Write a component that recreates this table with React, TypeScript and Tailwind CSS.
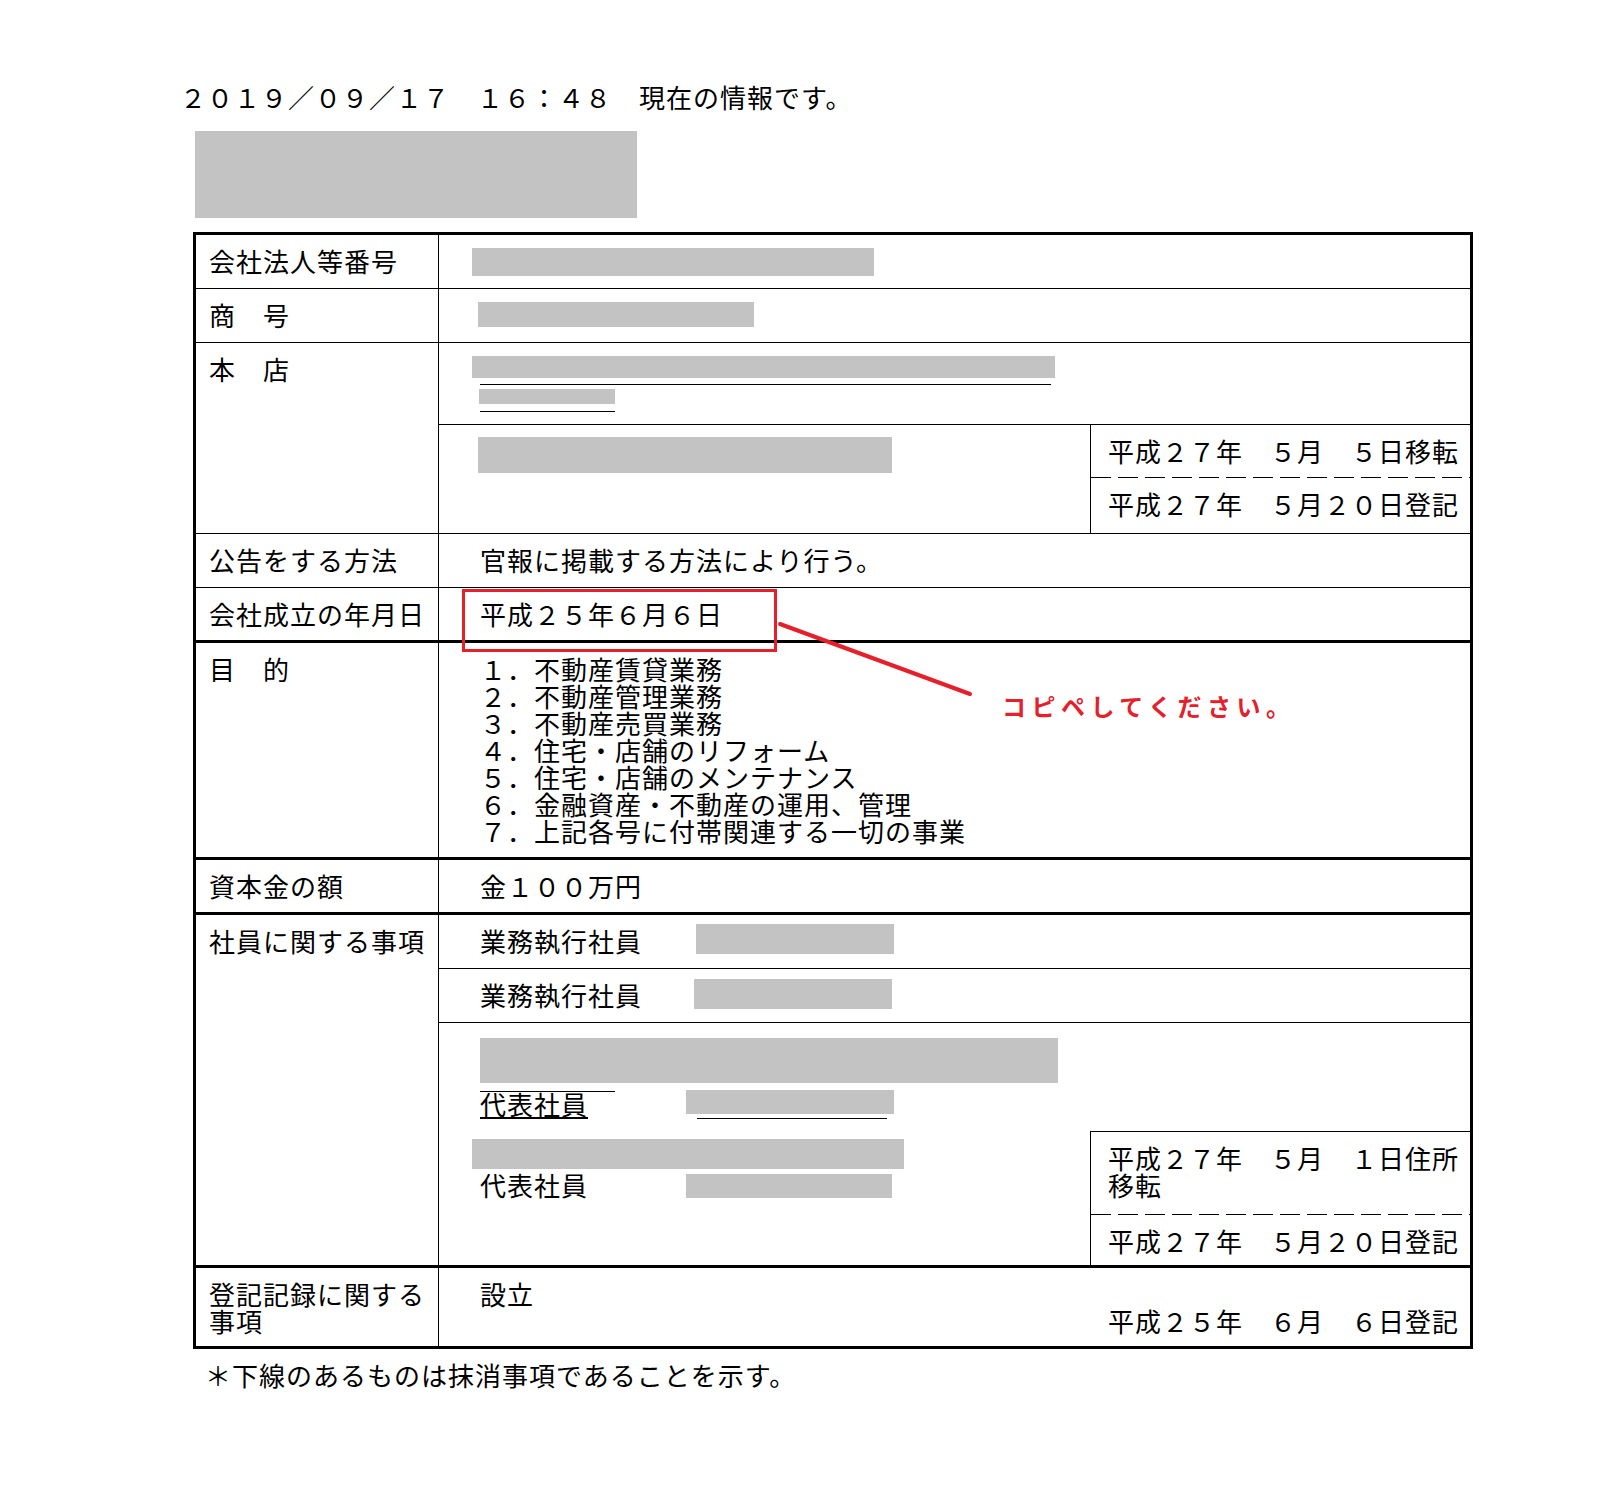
import React from 'react';

const PURPOSES = [
  '１．不動産賃貸業務',
  '２．不動産管理業務',
  '３．不動産売買業務',
  '４．住宅・店舗のリフォーム',
  '５．住宅・店舗のメンテナンス',
  '６．金融資産・不動産の運用、管理',
  '７．上記各号に付帯関連する一切の事業',
];

function Gray({ className = '' }: { className?: string }) {
  return <div className={`bg-[#c3c3c3] ${className}`} />;
}

// underline left behind by a struck (抹消) entry whose text is redacted
function Struck({ className = '' }: { className?: string }) {
  return <div className={`h-[29px] border-b border-black ${className}`} />;
}

function Dashed() {
  return (
    <div className="h-px bg-[image:repeating-linear-gradient(90deg,#000_0px,#000_20px,transparent_20px,transparent_27px)]" />
  );
}

function Label({ children }: { children: React.ReactNode }) {
  return <div className="border-r border-black pl-[13px] pr-[8px] pt-[12px]">{children}</div>;
}

function Row({
  label,
  h,
  thick,
  children,
}: {
  label: React.ReactNode;
  h: string;
  thick?: boolean;
  children: React.ReactNode;
}) {
  return (
    <div className={`grid grid-cols-[243px_1fr] border-black ${h} ${thick ? 'border-b-[3px]' : 'border-b'}`}>
      <Label>{label}</Label>
      {children}
    </div>
  );
}

export default function App() {
  return (
    <div className="relative min-h-[1503px] w-full bg-white font-['Noto_Sans_CJK_JP','Noto_Sans_JP',sans-serif] text-[26px] font-normal leading-[27px] tracking-[1px] text-black">
      <div className="pl-[180px] pt-[83px]">２０１９／０９／１７　１６：４８　現在の情報です。</div>
      <Gray className="ml-[195px] mt-[21px] h-[87px] w-[442px]" />

      <div className="ml-[193px] mt-[14px] w-[1280px] border-[3px] border-black">
        <Row label="会社法人等番号" h="h-[54px]">
          <div className="pl-[33px] pt-[13px]">
            <Gray className="h-[28px] w-[402px]" />
          </div>
        </Row>

        <Row label="商　号" h="h-[54px]">
          <div className="pl-[39px] pt-[13px]">
            <Gray className="h-[25px] w-[276px]" />
          </div>
        </Row>

        <Row label="本　店" h="h-[191px]">
          <div className="flex flex-col">
            <div className="relative h-[82px] border-b border-black pl-[41px] pt-[13px]">
              <div className="h-[27px]">
                <Struck className="w-[571px]" />
              </div>
              <div className="h-[27px]">
                <Struck className="w-[135px]" />
              </div>
              <Gray className="absolute left-[33px] top-[13px] h-[22px] w-[583px]" />
              <Gray className="absolute left-[40px] top-[46px] h-[15px] w-[136px]" />
            </div>
            <div className="flex flex-1">
              <div className="flex-1 pl-[39px] pt-[12px]">
                <Gray className="h-[36px] w-[414px]" />
              </div>
              <div className="flex w-[380px] flex-col border-l border-black">
                <div className="h-[52px] pl-[17px] pt-[12px]">平成２７年　５月　５日移転</div>
                <Dashed />
                <div className="flex-1 pl-[17px] pt-[12px]">平成２７年　５月２０日登記</div>
              </div>
            </div>
          </div>
        </Row>

        <Row label="公告をする方法" h="h-[54px]">
          <div className="pl-[41px] pt-[12px]">官報に掲載する方法により行う。</div>
        </Row>

        <Row label="会社成立の年月日" h="h-[55px]" thick>
          <div className="pl-[41px] pt-[12px]">平成２５年６月６日</div>
        </Row>

        <Row label="目　的" h="h-[217px]" thick>
          <div className="whitespace-pre-line pl-[41px] pt-[12px]">{PURPOSES.join('\n')}</div>
        </Row>

        <Row label="資本金の額" h="h-[55px]" thick>
          <div className="pl-[41px] pt-[12px]">金１００万円</div>
        </Row>

        <Row label="社員に関する事項" h="h-[353px]" thick>
          <div className="flex flex-col">
            <div className="flex h-[54px] items-start border-b border-black pl-[41px]">
              <span className="pt-[12px]">業務執行社員</span>
              <Gray className="ml-[54px] mt-[9px] h-[30px] w-[198px]" />
            </div>
            <div className="flex h-[54px] items-start border-b border-black pl-[41px]">
              <span className="pt-[12px]">業務執行社員</span>
              <Gray className="ml-[52px] mt-[10px] h-[30px] w-[198px]" />
            </div>
            <div className="flex flex-1">
              <div className="relative flex-1 pl-[41px] pt-[13px]">
                <div className="h-[27px]" />
                <div className="h-[27px]">
                  <Struck className="w-[135px]" />
                </div>
                <div className="flex h-[27px]">
                  <span className="underline">代表社員</span>
                  <Struck className="ml-[109px] w-[190px]" />
                </div>
                <div className="h-[27px]" />
                <div className="h-[27px]" />
                <div className="h-[27px]">代表社員</div>
                <Gray className="absolute left-[41px] top-[15px] h-[45px] w-[578px]" />
                <Gray className="absolute left-[247px] top-[67px] h-[24px] w-[208px]" />
                <Gray className="absolute left-[33px] top-[116px] h-[30px] w-[432px]" />
                <Gray className="absolute left-[247px] top-[151px] h-[24px] w-[206px]" />
              </div>
              <div className="flex w-[380px] flex-col justify-end">
                <div className="border-l border-t border-black">
                  <div className="h-[82px] whitespace-pre-line pl-[17px] pt-[12px]">
                    {'平成２７年　５月　１日住所\n移転'}
                  </div>
                  <Dashed />
                  <div className="h-[50px] pl-[17px] pt-[12px]">平成２７年　５月２０日登記</div>
                </div>
              </div>
            </div>
          </div>
        </Row>

        <div className="grid h-[78px] grid-cols-[243px_1fr]">
          <Label>登記記録に関する事項</Label>
          <div className="pl-[41px] pr-[11px] pt-[12px]">
            <div>設立</div>
            <div className="text-right">平成２５年　６月　６日登記</div>
          </div>
        </div>
      </div>

      <div className="ml-[205px] mt-[12px]">＊下線のあるものは抹消事項であることを示す。</div>

      {/* red annotation drawn over the document */}
      <div className="absolute left-[462px] top-[589px] h-[63px] w-[315px] border-[3px] border-[#e4212b]" />
      <svg className="pointer-events-none absolute left-0 top-0" width="1613" height="1503">
        <line x1="780" y1="624" x2="970" y2="694" stroke="#e4212b" strokeWidth="4" strokeLinecap="round" />
      </svg>
      <div className="absolute left-[1002px] top-[692px] text-[24px] font-bold leading-[27px] tracking-[5.5px] text-[#e4212b]">
        コピペしてください。
      </div>
    </div>
  );
}
